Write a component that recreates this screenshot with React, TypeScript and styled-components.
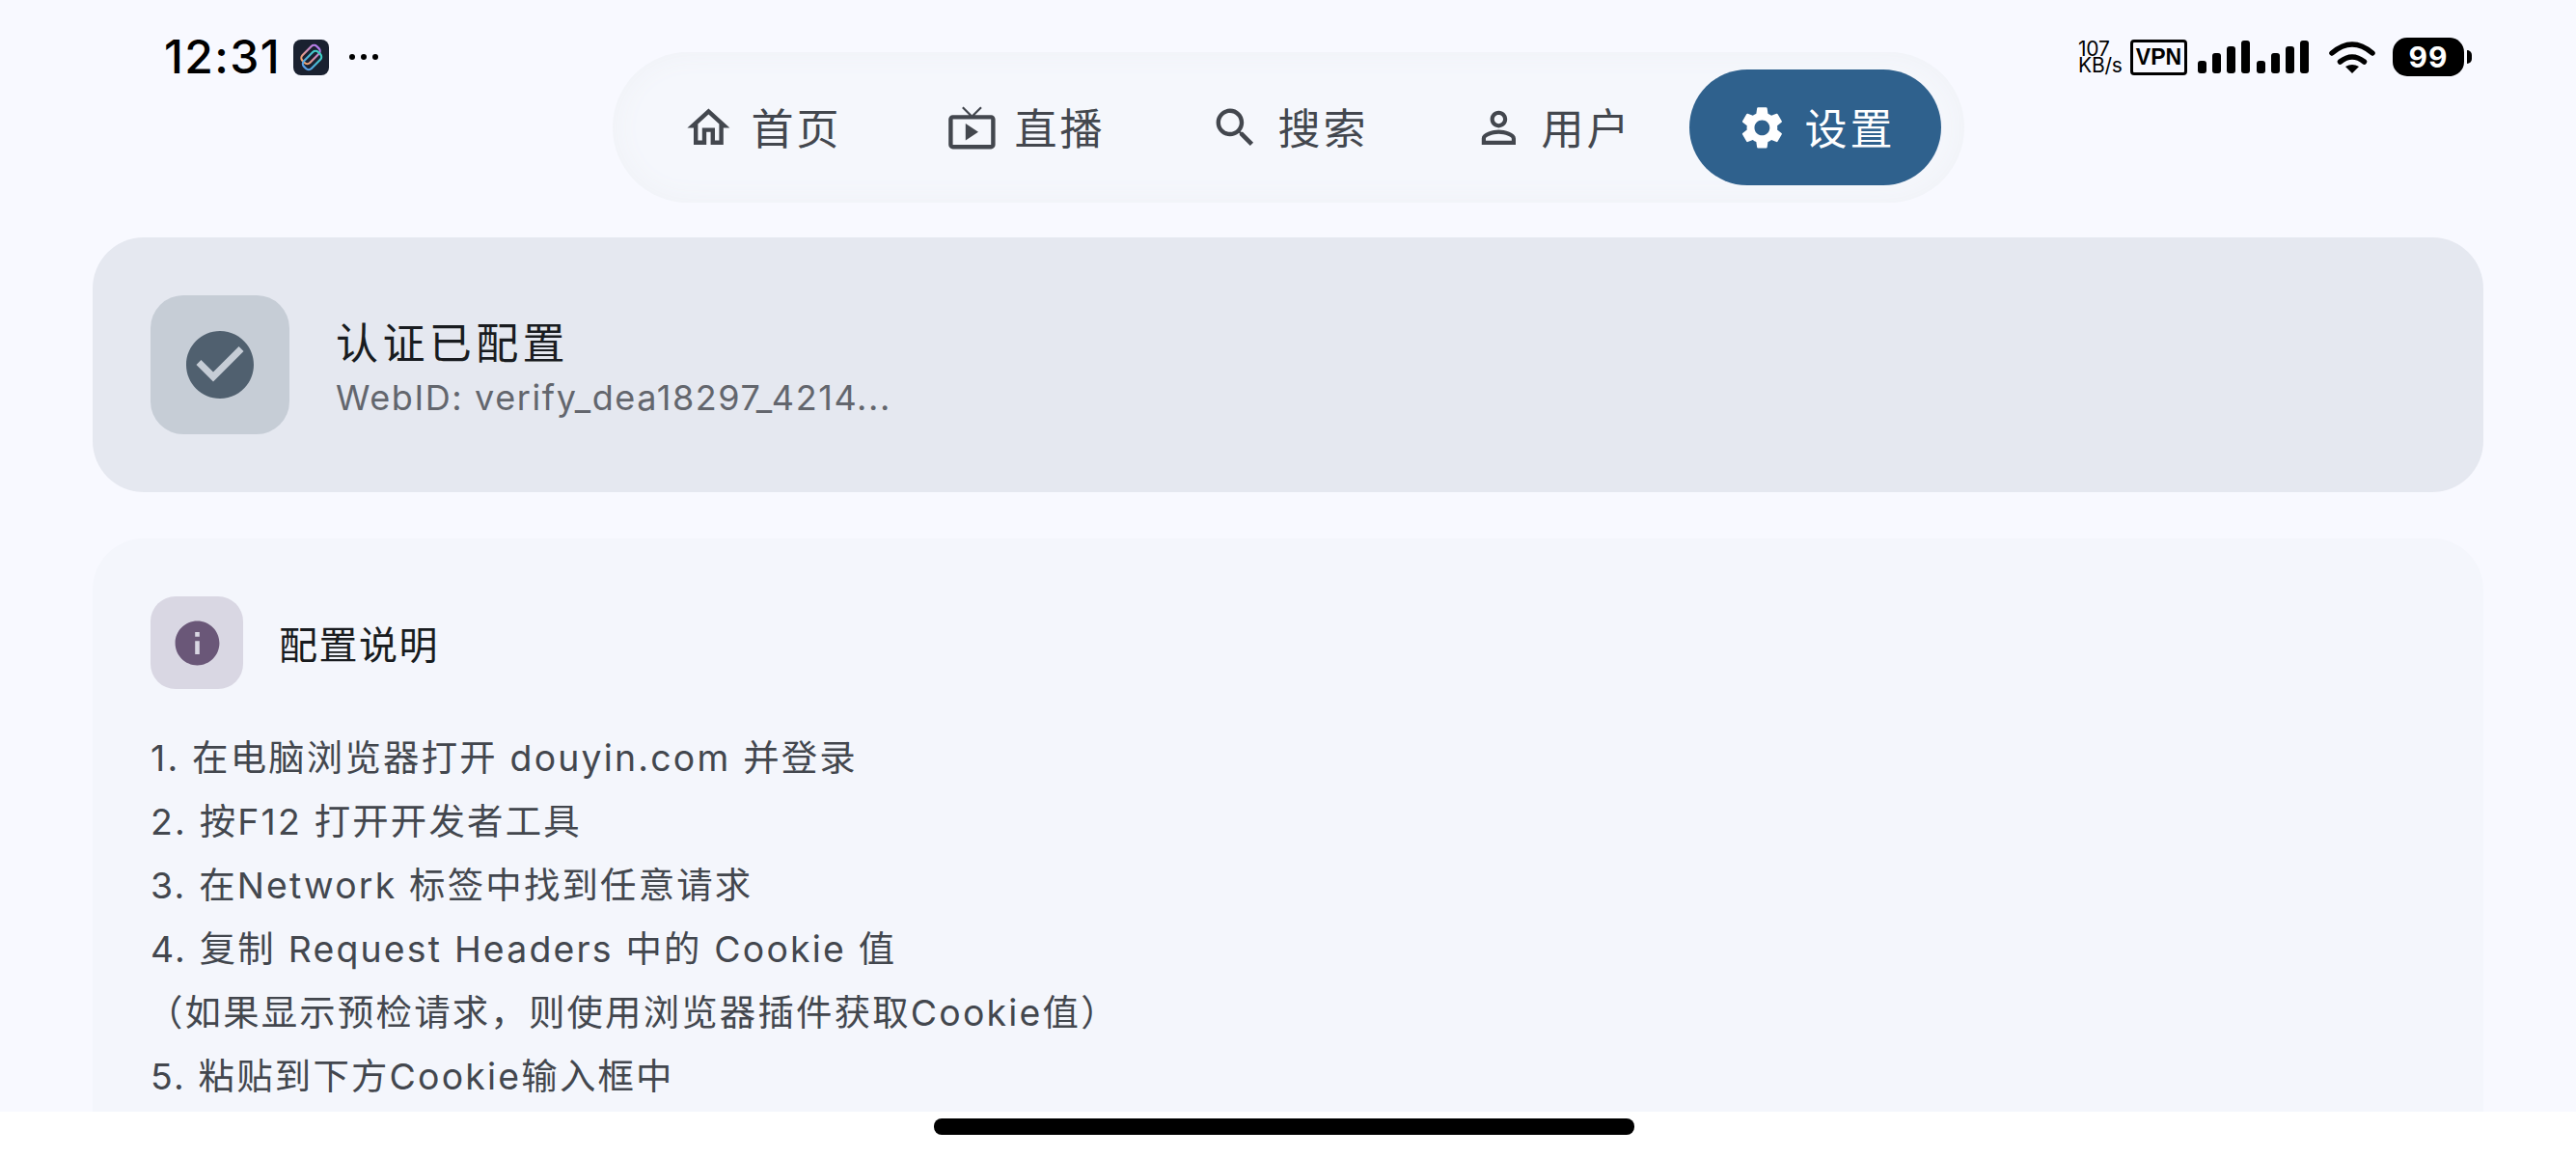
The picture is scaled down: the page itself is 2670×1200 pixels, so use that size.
import React from 'react';
import styled, { createGlobalStyle } from 'styled-components';

const Global = createGlobalStyle`
  html, body { margin: 0; padding: 0; background: #fff; overflow: hidden; }
  * { box-sizing: border-box; }
`;

const FONT = `Inter, "Noto Sans CJK SC", sans-serif`;

const Page = styled.div`
  width: 2670px;
  height: 1200px;
  display: flex;
  flex-direction: column;
  font-family: ${FONT};
`;
const Screen = styled.main`
  position: relative;
  flex: 1;
  min-height: 0;
  overflow: hidden;
  background: #f8f9ff;
  padding: 54px 96px 0;
  display: flex;
  flex-direction: column;
`;
const Footer = styled.div`
  height: 48px;
  background: #fff;
  display: flex;
  justify-content: center;
  padding: 7px 0 0 0;
`;
const HomeBar = styled.div`
  width: 726px;
  height: 17px;
  margin-left: -9px;
  border-radius: 8px;
  background: #000;
`;

/* status bar overlay */
const StatusBar = styled.div`
  position: absolute;
  top: 36px;
  left: 170px;
  right: 108px;
  height: 46px;
  display: flex;
  align-items: center;
  justify-content: space-between;
  color: #000;
`;
const StatusGroup = styled.div`
  display: flex;
  align-items: center;
`;
const Clock = styled.span`
  font-size: 48px;
  font-weight: 500;
  letter-spacing: 1.4px;
  line-height: 46px;
  width: 134px;
`;
const More = styled.div`
  display: flex;
  gap: 6px;
  margin-left: 21px;
`;
const Dot = styled.i`
  width: 6px;
  height: 6px;
  border-radius: 50%;
  background: #000;
`;
const Speed = styled.div`
  display: flex;
  flex-direction: column;
  align-items: flex-start;
  font-size: 21px;
  line-height: 17px;
  letter-spacing: -0.2px;
  width: 48px;
  margin-right: 6px;
`;
const Vpn = styled.div`
  width: 59px;
  height: 37px;
  border: 3.5px solid #000;
  border-radius: 4px;
  font-size: 23px;
  font-weight: 800;
  font-family: "Liberation Sans", sans-serif;
  display: flex;
  align-items: center;
  justify-content: center;
  margin-right: 11px;
`;
const Signal = styled.svg`
  display: block;
  margin-right: 21px;
`;
const Wifi = styled.svg`
  display: block;
  margin-right: 18px;
`;
const Logo = styled.svg`
  display: block;
`;
const Battery = styled.div`
  display: flex;
  align-items: center;
  gap: 3px;
`;
const BatteryBody = styled.div`
  width: 74px;
  height: 40px;
  border-radius: 15px;
  background: #000;
  color: #fff;
  font-size: 30px;
  font-weight: 700;
  letter-spacing: 1px;
  display: flex;
  align-items: center;
  justify-content: center;
`;
const BatteryTip = styled.div`
  width: 5px;
  height: 14px;
  border-radius: 0 5px 5px 0;
  background: #000;
`;

/* nav */
const Nav = styled.nav`
  align-self: center;
  display: flex;
  gap: 12px;
  padding: 18px 24px;
  height: 156px;
  border-radius: 78px;
  background: #f5f7fc;
  box-shadow: inset 0 0 30px #eff1f6;
`;
const NavItem = styled.div<{ $active?: boolean }>`
  width: 261px;
  height: 120px;
  border-radius: 60px;
  padding-left: 2px;
  display: flex;
  align-items: center;
  justify-content: center;
  gap: 18px;
  color: ${p => (p.$active ? '#fff' : '#43474e')};
  background: ${p => (p.$active ? '#2f618d' : 'transparent')};
  font-size: 44px;
  letter-spacing: 3px;
  line-height: 1;
`;
const NavLabel = styled.span`
  padding-top: 3px;
`;
const Icon = styled.svg`
  display: block;
  flex: none;
  fill: currentColor;
`;

/* cards */
const StatusCard = styled.section`
  margin-top: 36px;
  height: 264px;
  flex: none;
  padding: 60px;
  border-radius: 53px;
  background: #e5e8f0;
  display: flex;
  align-items: center;
  gap: 48px;
`;
const IconBox = styled.div<{ $size: number; $radius: number; $bg: string; $fg: string }>`
  flex: none;
  width: ${p => p.$size}px;
  height: ${p => p.$size}px;
  border-radius: ${p => p.$radius}px;
  background: ${p => p.$bg};
  color: ${p => p.$fg};
  display: flex;
  align-items: center;
  justify-content: center;
`;
const StatusText = styled.div`
  display: flex;
  flex-direction: column;
  gap: 3px;
  padding-top: 4px;
`;
const StatusTitle = styled.div`
  font-size: 44px;
  line-height: 60px;
  letter-spacing: 4.4px;
  color: #191c20;
`;
const StatusSub = styled.div`
  font-size: 36px;
  line-height: 46px;
  letter-spacing: 1.6px;
  color: #63666d;
`;
const GuideCard = styled.section`
  margin-top: 48px;
  flex: none;
  padding: 60px;
  border-radius: 53px 53px 0 0;
  background: #f4f6fc;
`;
const GuideHeader = styled.div`
  display: flex;
  align-items: center;
  gap: 37px;
  margin-bottom: 39px;
`;
const GuideTitle = styled.div`
  font-size: 40px;
  letter-spacing: 1.5px;
  color: #191c20;
`;
const Steps = styled.div`
  display: flex;
  flex-direction: column;
  color: #43474e;
  font-size: 37.4px;
  line-height: 66px;
  letter-spacing: 2.2px;
`;
const Step = styled.div<{ $hanging?: boolean }>`
  white-space: nowrap;
  margin-left: ${p => (p.$hanging ? '-4px' : '0')};
`;

const P = {
  home: 'M12 5.69l5 4.5V18h-2v-6H9v6H7v-7.81l5-4.5M12 3L2 12h3v8h6v-6h2v6h6v-8h3L12 3z',
  tv: 'M21 6h-7.59l3.29-3.29L16 2l-4 4-4-4-.71.71L10.59 6H3c-1.1 0-2 .89-2 2v12c0 1.1.9 2 2 2h18c1.1 0 2-.9 2-2V8c0-1.11-.9-2-2-2zm0 14H3V8h18v12zM9 10v8l6-4-6-4z',
  search: 'M15.5 14h-.79l-.28-.27C15.41 12.59 16 11.11 16 9.5 16 5.91 13.09 3 9.5 3S3 5.91 3 9.5 5.91 16 9.5 16c1.61 0 3.09-.59 4.23-1.57l.27.28v.79l5 4.99L20.49 19l-4.99-5zm-6 0C7.01 14 5 11.99 5 9.5S7.01 5 9.5 5 14 7.01 14 9.5 11.99 14 9.5 14z',
  person: 'M12 5.9c1.16 0 2.1.94 2.1 2.1s-.94 2.1-2.1 2.1S9.9 9.16 9.9 8s.94-2.1 2.1-2.1m0 9c2.97 0 6.1 1.46 6.1 2.1v1.1H5.9V17c0-.64 3.13-2.1 6.1-2.1M12 4C9.79 4 8 5.79 8 8s1.79 4 4 4 4-1.79 4-4-1.79-4-4-4zm0 9c-2.67 0-8 1.34-8 4v3h16v-3c0-2.66-5.33-4-8-4z',
  settings: 'M19.14 12.94c.04-.3.06-.61.06-.94 0-.32-.02-.64-.07-.94l2.03-1.58c.18-.14.23-.41.12-.61l-1.92-3.32c-.12-.22-.37-.29-.59-.22l-2.39.96c-.5-.38-1.03-.7-1.62-.94l-.36-2.54c-.04-.24-.24-.41-.48-.41h-3.84c-.24 0-.43.17-.47.41l-.36 2.54c-.59.24-1.13.57-1.62.94l-2.39-.96c-.22-.08-.47 0-.59.22L2.74 8.87c-.12.21-.08.47.12.61l2.03 1.58c-.05.3-.09.63-.09.94s.02.64.07.94l-2.03 1.58c-.18.14-.23.41-.12.61l1.92 3.32c.12.22.37.29.59.22l2.39-.96c.5.38 1.03.7 1.62.94l.36 2.54c.05.24.24.41.48.41h3.84c.24 0 .44-.17.47-.41l.36-2.54c.59-.24 1.13-.56 1.62-.94l2.39.96c.22.08.47 0 .59-.22l1.92-3.32c.12-.22.07-.47-.12-.61l-2.01-1.58zM12 15.6c-1.98 0-3.6-1.62-3.6-3.6s1.62-3.6 3.6-3.6 3.6 1.62 3.6 3.6-1.62 3.6-3.6 3.6z',
  check: 'M12 2C6.48 2 2 6.48 2 12s4.48 10 10 10 10-4.48 10-10S17.52 2 12 2zm-2 15l-5-5 1.41-1.41L10 14.17l7.59-7.59L19 8l-9 9z',
  info: 'M12 2C6.48 2 2 6.48 2 12s4.48 10 10 10 10-4.48 10-10S17.52 2 12 2zm1 15h-2v-6h2v6zm0-8h-2V7h2v2z',
};

const Glyph = ({ d, size = 52.8 }: { d: string; size?: number }) => (
  <Icon width={size} height={size} viewBox="0 0 24 24"><path d={d} /></Icon>
);

const AppLogo = () => (
  <Logo width="37" height="37" viewBox="0 0 37 37">
    <defs>
      <linearGradient id="linkTop" x1="0" y1="0" x2="1" y2="0">
        <stop offset="0" stopColor="#eea36f" />
        <stop offset="1" stopColor="#b27bee" />
      </linearGradient>
      <linearGradient id="linkBottom" x1="0" y1="0" x2="1" y2="0">
        <stop offset="0" stopColor="#5a9fe8" />
        <stop offset="1" stopColor="#3fd0c4" />
      </linearGradient>
    </defs>
    <rect width="37" height="37" rx="8" fill="#1a2130" />
    <rect x="7.5" y="10" width="21" height="11" rx="4" fill="none" stroke="url(#linkTop)" strokeWidth="2.2" transform="rotate(-45 18 15.5)" />
    <rect x="9" y="16" width="21" height="11" rx="4" fill="none" stroke="url(#linkBottom)" strokeWidth="2.2" transform="rotate(-45 19.5 21.5)" />
  </Logo>
);

const bars = [
  { x: 0, h: 13 }, { x: 15, h: 21 }, { x: 30, h: 28 }, { x: 45, h: 34 },
  { x: 61, h: 13 }, { x: 76, h: 21 }, { x: 91, h: 28 }, { x: 106, h: 34 },
];

const nav = [
  { label: '首页', d: P.home },
  { label: '直播', d: P.tv },
  { label: '搜索', d: P.search },
  { label: '用户', d: P.person },
  { label: '设置', d: P.settings, active: true },
];

const steps = [
  '1. 在电脑浏览器打开 douyin.com 并登录',
  '2. 按F12 打开开发者工具',
  '3. 在Network 标签中找到任意请求',
  '4. 复制 Request Headers 中的 Cookie 值',
  '（如果显示预检请求，则使用浏览器插件获取Cookie值）',
  '5. 粘贴到下方Cookie输入框中',
];

export default function App() {
  return (
    <Page>
      <Global />
      <Screen>
        <StatusBar>
          <StatusGroup>
            <Clock>12:31</Clock>
            <AppLogo />
            <More><Dot /><Dot /><Dot /></More>
          </StatusGroup>
          <StatusGroup>
            <Speed><span>107</span><span>KB/s</span></Speed>
            <Vpn>VPN</Vpn>
            <Signal width="115" height="34" viewBox="0 0 115 34">
              {bars.map(b => (
                <rect key={b.x} x={b.x} y={34 - b.h} width="9" height={b.h} rx="3" fill="#000" />
              ))}
            </Signal>
            <Wifi width="48" height="34" viewBox="0 0 48 34">
              <path d="M3 13 Q24 -5 45 13" fill="none" stroke="#000" strokeWidth="5.5" strokeLinecap="round" />
              <path d="M11.5 22 Q24 12 36.5 22" fill="none" stroke="#000" strokeWidth="5.5" strokeLinecap="round" />
              <path d="M17 27 Q24 23 31 27 L24 34 Z" fill="#000" />
            </Wifi>
            <Battery>
              <BatteryBody>99</BatteryBody>
              <BatteryTip />
            </Battery>
          </StatusGroup>
        </StatusBar>

        <Nav>
          {nav.map(n => (
            <NavItem key={n.label} $active={n.active}>
              <Glyph d={n.d} />
              <NavLabel>{n.label}</NavLabel>
            </NavItem>
          ))}
        </Nav>

        <StatusCard>
          <IconBox $size={144} $radius={34} $bg="#c6cdd6" $fg="#50606f">
            <Glyph d={P.check} size={84} />
          </IconBox>
          <StatusText>
            <StatusTitle>认证已配置</StatusTitle>
            <StatusSub>WebID: verify_dea18297_4214...</StatusSub>
          </StatusText>
        </StatusCard>

        <GuideCard>
          <GuideHeader>
            <IconBox $size={96} $radius={26} $bg="#d9d7e3" $fg="#6a5778">
              <Glyph d={P.info} size={55} />
            </IconBox>
            <GuideTitle>配置说明</GuideTitle>
          </GuideHeader>
          <Steps>
            {steps.map(s => <Step key={s} $hanging={s.startsWith('（')}>{s}</Step>)}
          </Steps>
        </GuideCard>
      </Screen>
      <Footer><HomeBar /></Footer>
    </Page>
  );
}
